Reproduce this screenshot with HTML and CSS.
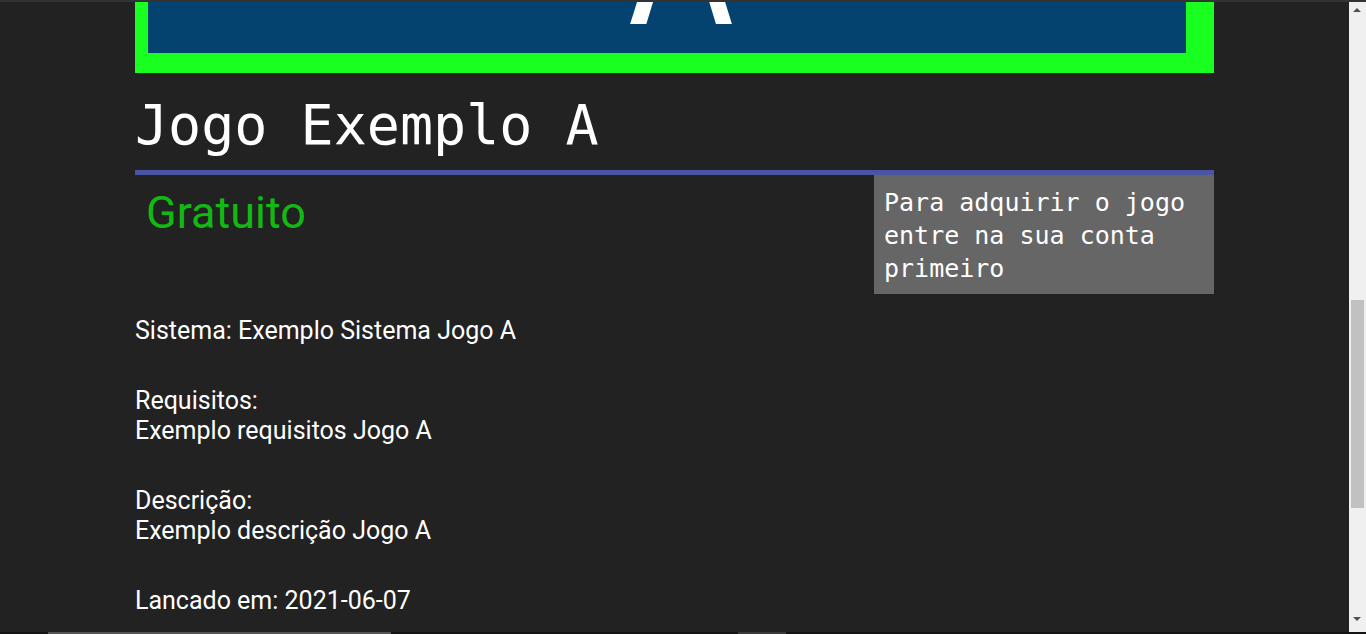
FILE: index.html
```html
<!DOCTYPE html>
<html lang="pt">
<head>
<meta charset="utf-8">
<title>Jogo Exemplo A</title>
<link rel="stylesheet" href="styles.css">
</head>
<body>
<div class="page">
  <main class="game">
    <div class="cover">
      <div class="cover-art"><span class="cover-letter">A</span></div>
    </div>
    <h1 class="title">Jogo Exemplo A</h1>
    <div class="rule"></div>
    <div class="buy-row">
      <p class="price">Gratuito</p>
      <p class="buy-note">Para adquirir o jogo entre na sua conta primeiro</p>
    </div>
    <section class="details">
      <p>Sistema: Exemplo Sistema Jogo A</p>
      <p>Requisitos:<br>Exemplo requisitos Jogo A</p>
      <p>Descrição:<br>Exemplo descrição Jogo A</p>
      <p>Lancado em: 2021-06-07</p>
    </section>
  </main>
</div>

<div class="frame-top"></div>
<div class="vscroll">
  <span class="arrow arrow-up"></span>
  <span class="thumb"></span>
  <span class="arrow arrow-down"></span>
</div>
<div class="frame-bottom">
  <span class="seg seg-a"></span>
  <span class="seg seg-b"></span>
</div>
</body>
</html>
```
FILE: styles.css
```css
html, body {
  margin: 0;
  padding: 0;
  background: #222222;
  overflow: hidden;
}

.page {
  width: 1349px;
  padding-top: 2px;
}

.game {
  width: 1079px;
  margin: 0 auto;
  color: #ffffff;
}

.cover {
  height: 71px;
  box-sizing: border-box;
  border-left: 13px solid #19ff1f;
  border-right: 28px solid #19ff1f;
  border-bottom: 20px solid #19ff1f;
  background: #04436f;
}

.cover-art {
  position: relative;
  height: 100%;
  overflow: hidden;
}

.cover-letter {
  position: absolute;
  left: 483px;
  top: -106px;
  font-family: "Liberation Sans", Arial, sans-serif;
  font-weight: 400;
  font-size: 150px;
  line-height: 1;
  color: #ffffff;
  -webkit-text-stroke: 1.5px #ffffff;
  transform: scaleY(1.3);
  transform-origin: 50% 127px;
}

.title {
  margin: 20px 0 13px;
  font-family: "DejaVu Sans Mono", "Liberation Mono", monospace;
  font-weight: 400;
  font-size: 55px;
  line-height: 64px;
}

.rule {
  height: 5px;
  background: #4b53a3;
}

.buy-row {
  display: flex;
  justify-content: space-between;
  align-items: flex-start;
}

.price {
  margin: 0;
  padding: 12px 0 0 11px;
  font-family: Roboto, "Noto Sans", sans-serif;
  font-size: 45px;
  line-height: 52px;
  color: #13b913;
}

.buy-note {
  margin: 0;
  width: 340px;
  box-sizing: border-box;
  padding: 11px 10px 9px;
  background: #666666;
  font-family: "DejaVu Sans Mono", "Liberation Mono", monospace;
  font-size: 25px;
  line-height: 33px;
  color: #ffffff;
}

.details {
  padding-top: 22px;
  font-family: Roboto, "Noto Sans", sans-serif;
  font-size: 25px;
  line-height: 30px;
}

.details p {
  margin: 0 0 40px;
}

/* window chrome overlays */
.frame-top {
  position: fixed;
  left: 0;
  top: 0;
  width: 100%;
  height: 2px;
  background: #333333;
}

.vscroll {
  position: fixed;
  right: 0;
  top: 2px;
  width: 17px;
  height: 630px;
  background: #f0f0f0;
}

.vscroll .thumb {
  position: absolute;
  left: 2px;
  top: 298px;
  width: 13px;
  height: 208px;
  background: #c1c1c1;
}

.vscroll .arrow {
  position: absolute;
  left: 4px;
  width: 0;
  height: 0;
  border-left: 4px solid transparent;
  border-right: 4px solid transparent;
}

.vscroll .arrow-up {
  top: 6px;
  border-bottom: 4px solid #505050;
}

.vscroll .arrow-down {
  bottom: 11px;
  border-top: 4px solid #505050;
}

.frame-bottom {
  position: fixed;
  left: 0;
  bottom: 0;
  width: 100%;
  height: 2px;
  background: #141414;
}

.frame-bottom .seg {
  position: absolute;
  top: 0;
  height: 2px;
  background: #555555;
}

.frame-bottom .seg-a {
  left: 48px;
  width: 343px;
}

.frame-bottom .seg-b {
  left: 738px;
  width: 48px;
  background: #3a3a3a;
}
```
